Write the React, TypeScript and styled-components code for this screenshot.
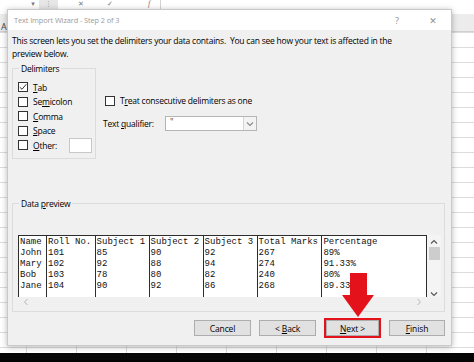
import styled, { createGlobalStyle } from "styled-components";

const UI_FONT = `"Open Sans", "Noto Sans", "DejaVu Sans", sans-serif`;
const MONO = `"Liberation Mono", "DejaVu Sans Mono", monospace`;

const GlobalStyle = createGlobalStyle`
  html, body {
    margin: 0;
    padding: 0;
    width: 474px;
    height: 362px;
    overflow: hidden;
    background: #ffffff;
  }
  #root {
    width: 474px;
    height: 362px;
  }
  * {
    box-sizing: border-box;
  }
`;

const Screen = styled.div`
  position: relative;
  width: 474px;
  height: 362px;
  display: flex;
  flex-direction: column;
  overflow: hidden;
  font-family: ${UI_FONT};
  background: #ffffff;
`;

const FormulaBar = styled.div`
  height: 14px;
  display: flex;
  align-items: flex-start;
  padding-left: 29px;
  background: #ffffff;
  color: #7a7a7a;
  font-size: 7px;
  line-height: 8px;
`;

const BarIcon = styled.span<{ $w: number }>`
  width: ${({ $w }) => $w}px;
  text-align: center;
`;

const BarSep = styled.span`
  width: 19px;
  height: 12px;
  margin: 0 18px 0 2px;
  background: #e6e6e6;
  text-align: center;
  color: #8a8a8a;
`;

const Fx = styled.span`
  font-family: "Liberation Serif", serif;
  font-style: italic;
  font-size: 8px;
  margin-left: 14px;
  padding-right: 10px;
  border-right: 1px solid #d4d4d4;
  height: 12px;
`;

const HeaderRow = styled.div`
  height: 18px;
  background: #ececec;
  border-bottom: 1px solid #d0d0d0;
  font-size: 9px;
  color: #444;
  padding-left: 1px;
  line-height: 26px;
  overflow: hidden;
`;

const Grid = styled.div`
  flex: 1;
  background-color: #ffffff;
  background-image: linear-gradient(to right, #d9d9d9 1px, transparent 1px),
    linear-gradient(to bottom, #dcdcdc 1px, transparent 1px);
  background-size: 50px 15px, 50px 15px;
  background-position: 26px 0, 0 0;
`;

const Taskbar = styled.div`
  height: 9px;
  background: #050505;
`;

const Dialog = styled.div`
  position: absolute;
  left: 7px;
  top: 9px;
  width: 445px;
  height: 337px;
  background: #f0f0f0;
  border: 1px solid #c9c9c9;
  box-shadow: 0 1px 6px rgba(0, 0, 0, 0.28);
  display: flex;
  flex-direction: column;
`;

const TitleBar = styled.div`
  height: 20px;
  background: #ffffff;
  display: flex;
  align-items: center;
  padding-left: 6px;
  color: #9b9b9b;
  font-size: 7.4px;
  letter-spacing: -0.1px;
`;

const TitleText = styled.span`
  flex: 1;
`;

const TitleButton = styled.span<{ $w: number }>`
  width: ${({ $w }) => $w}px;
  text-align: center;
  color: #8f8f8f;
  font-size: 9px;
`;

const Body = styled.div`
  flex: 1;
  display: flex;
  flex-direction: column;
  padding: 4px 6px 7px 4px;
  font-size: 8.5px;
  letter-spacing: -0.22px;
  color: #000;
`;

const Intro = styled.p`
  margin: 0;
  line-height: 13px;
`;

const Upper = styled.div`
  display: flex;
  margin-top: 3px;
`;

const Group = styled.fieldset<{ $w?: number }>`
  margin: 0;
  padding: 0 3px 0 5px;
  border: 1px solid #dcdcdc;
  width: ${({ $w }) => ($w ? `${$w}px` : "auto")};
  min-width: 0;
`;

const Legend = styled.legend`
  padding: 0 2px;
  margin-left: 1px;
  line-height: 11px;
  color: #000;
`;

const DelimList = styled.div`
  display: flex;
  flex-direction: column;
  padding: 6px 0 5px;
`;

const CheckRow = styled.label`
  display: flex;
  align-items: center;
  height: 14.5px;
  gap: 5px;
  white-space: nowrap;
`;

const Box = styled.span`
  width: 10px;
  height: 10px;
  border: 1px solid #333;
  background: #fff;
  display: inline-flex;
  align-items: center;
  justify-content: center;
  flex: none;
`;

const U = styled.span`
  text-decoration: underline;
`;

const OtherInput = styled.span`
  width: 23px;
  height: 15px;
  margin-left: 7px;
  background: #fff;
  border: 1px solid #c8c8c8;
`;

const Options = styled.div`
  display: flex;
  flex-direction: column;
  padding: 32px 0 0 7px;
  gap: 10px;
`;

const Treat = styled(CheckRow)`
  height: 11px;
  padding-left: 2px;
`;

const QualifierRow = styled.div`
  display: flex;
  align-items: center;
  height: 15px;
`;

const QualifierLabel = styled.span`
  width: 62px;
`;

const Select = styled.span`
  width: 92px;
  height: 15px;
  background: #fff;
  border: 1px solid #b5b5b5;
  display: flex;
`;

const SelectValue = styled.span`
  flex: 1;
  padding-left: 4px;
  line-height: 10px;
  color: #444;
`;

const SelectArrow = styled.span`
  width: 13px;
  border-left: 1px solid #d6d6d6;
  background: #f3f3f3;
  display: flex;
  align-items: center;
  justify-content: center;
`;

const PreviewGroup = styled(Group)`
  margin-top: 39px;
  padding: 0 3px 4px 5px;
`;

const PreviewArea = styled.div`
  display: grid;
  grid-template-columns: 409px 14px;
  grid-template-rows: 62px 10px;
  margin-top: 26px;
`;

const Table = styled.div`
  border-top: 1px solid #2d2d2d;
  border-left: 1px solid #2d2d2d;
  border-right: 1px solid #2d2d2d;
  background: #fff;
  overflow: hidden;
  display: flex;
  padding-top: 1px;
  font-family: ${MONO};
  font-size: 9px;
  letter-spacing: 0;
  line-height: 11px;
  color: #111;
`;

const Column = styled.div<{ $chars: number; $first?: boolean }>`
  width: ${({ $chars }) => $chars * 5.4}px;
  flex: none;
  padding-left: 1px;
  border-left: ${({ $first }) => ($first ? "none" : "1px solid #2d2d2d")};
  margin-top: -1px;
  padding-top: 1px;
  white-space: pre;
`;

const VScroll = styled.div`
  display: flex;
  flex-direction: column;
  align-items: center;
  background: #f4f4f4;
  padding-top: 4px;
`;

const Thumb = styled.div`
  width: 11px;
  height: 13px;
  margin: 2px 0 auto;
  background: #cdcdcd;
`;

const HScroll = styled.div`
  display: flex;
  justify-content: space-between;
  align-items: center;
  padding: 0 5px 0 5px;
  grid-column: 1 / 2;
`;

const Buttons = styled.div`
  margin-top: auto;
  display: flex;
  justify-content: flex-end;
  align-items: center;
  gap: 8px;
`;

const Button = styled.button<{ $w?: number }>`
  width: ${({ $w }) => $w ?? 57}px;
  height: 16px;
  padding: 0;
  background: #e1e1e1;
  border: 1px solid #adadad;
  font-family: ${UI_FONT};
  font-size: 8.5px;
  letter-spacing: -0.1px;
  color: #000;
`;

const Highlight = styled.span`
  display: flex;
  border: 2px solid #e3121b;
  padding: 0;
`;

const Arrow = styled.svg`
  position: absolute;
  left: 334px;
  top: 263px;
`;

const Chevron = ({ d, color }: { d: string; color: string }) => (
  <svg width="8" height="6" viewBox="0 0 8 6">
    <path d={d} fill="none" stroke={color} strokeWidth="1.1" />
  </svg>
);

const columns = [
  { chars: 5, cells: ["Name", "John", "Mary", "Bob", "Jane"] },
  { chars: 9, cells: ["Roll No.", "101", "102", "103", "104"] },
  { chars: 10, cells: ["Subject 1", "85", "92", "78", "90"] },
  { chars: 10, cells: ["Subject 2", "90", "88", "80", "92"] },
  { chars: 10, cells: ["Subject 3", "92", "94", "82", "86"] },
  { chars: 12, cells: ["Total Marks", "267", "274", "240", "268"] },
  { chars: 20, cells: ["Percentage", "89%", "91.33%", "80%", "89.33%"] },
];

function Check({ checked }: { checked?: boolean }) {
  return (
    <Box>
      {checked && (
        <svg width="8" height="8" viewBox="0 0 8 8">
          <path d="M0.8 4.2 L3 6.3 L7.3 1.2" fill="none" stroke="#333" strokeWidth="1" />
        </svg>
      )}
    </Box>
  );
}

export default function App() {
  return (
    <>
      <GlobalStyle />
      <Screen>
        <FormulaBar>
          <BarIcon $w={8}>▾</BarIcon>
          <BarSep>⋮</BarSep>
          <BarIcon $w={10}>✕</BarIcon>
          <BarIcon $w={48}>✓</BarIcon>
          <Fx>f</Fx>
        </FormulaBar>
        <HeaderRow>A</HeaderRow>
        <Grid />
        <Taskbar />

        <Dialog>
          <TitleBar>
            <TitleText>Text Import Wizard - Step 2 of 3</TitleText>
            <TitleButton $w={36}>?</TitleButton>
            <TitleButton $w={36}>✕</TitleButton>
          </TitleBar>
          <Body>
            <Intro>
              This screen lets you set the delimiters your data contains.&nbsp; You can see how your
              text is affected in the
              <br />
              preview below.
            </Intro>

            <Upper>
              <Group $w={84}>
                <Legend>Delimiters</Legend>
                <DelimList>
                  <CheckRow>
                    <Check checked />
                    <span>
                      <U>T</U>ab
                    </span>
                  </CheckRow>
                  <CheckRow>
                    <Check />
                    <span>
                      Se<U>m</U>icolon
                    </span>
                  </CheckRow>
                  <CheckRow>
                    <Check />
                    <span>
                      <U>C</U>omma
                    </span>
                  </CheckRow>
                  <CheckRow>
                    <Check />
                    <span>
                      <U>S</U>pace
                    </span>
                  </CheckRow>
                  <CheckRow>
                    <Check />
                    <span>
                      <U>O</U>ther:
                    </span>
                    <OtherInput />
                  </CheckRow>
                </DelimList>
              </Group>

              <Options>
                <Treat>
                  <Check />
                  <span>
                    T<U>r</U>eat consecutive delimiters as one
                  </span>
                </Treat>
                <QualifierRow>
                  <QualifierLabel>
                    Text <U>q</U>ualifier:
                  </QualifierLabel>
                  <Select>
                    <SelectValue>"</SelectValue>
                    <SelectArrow>
                      <Chevron d="M1 1.5 L4 4.5 L7 1.5" color="#8a8a8a" />
                    </SelectArrow>
                  </Select>
                </QualifierRow>
              </Options>
            </Upper>

            <PreviewGroup>
              <Legend>
                Data <U>p</U>review
              </Legend>
              <PreviewArea>
                <Table>
                  {columns.map((col, i) => (
                    <Column key={i} $chars={col.chars} $first={i === 0}>
                      {col.cells.join("\n")}
                    </Column>
                  ))}
                </Table>
                <VScroll>
                  <Chevron d="M1 4.5 L4 1.5 L7 4.5" color="#555" />
                  <Thumb />
                  <Chevron d="M1 1.5 L4 4.5 L7 1.5" color="#555" />
                </VScroll>
                <HScroll>
                  <svg width="6" height="8" viewBox="0 0 6 8">
                    <path d="M4.5 1 L1.5 4 L4.5 7" fill="none" stroke="#b5b5b5" strokeWidth="1" />
                  </svg>
                  <svg width="6" height="8" viewBox="0 0 6 8">
                    <path d="M1.5 1 L4.5 4 L1.5 7" fill="none" stroke="#b5b5b5" strokeWidth="1" />
                  </svg>
                </HScroll>
              </PreviewArea>
            </PreviewGroup>

            <Buttons>
              <Button>Cancel</Button>
              <Button>
                &lt; <U>B</U>ack
              </Button>
              <Highlight>
                <Button $w={53}>
                  <U>N</U>ext &gt;
                </Button>
              </Highlight>
              <Button $w={56}>
                <U>F</U>inish
              </Button>
            </Buttons>
          </Body>

          <Arrow width="32" height="44" viewBox="0 0 32 44">
            <rect x="8" y="0" width="17" height="23" fill="#e3121b" />
            <polygon points="0,22 32,22 16,44" fill="#e3121b" />
          </Arrow>
        </Dialog>
      </Screen>
    </>
  );
}
